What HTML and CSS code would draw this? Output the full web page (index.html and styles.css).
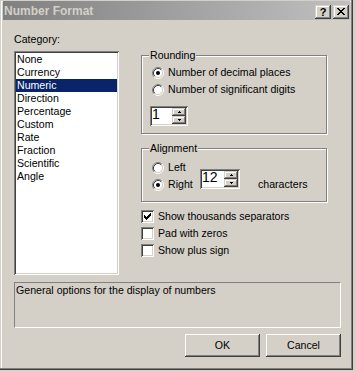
FILE: index.html
```html
<!DOCTYPE html>
<html>
<head>
<meta charset="utf-8">
<title>Number Format</title>
<link rel="stylesheet" href="styles.css">
</head>
<body>
<div class="window">
  <div class="titlebar">
    <span class="title">Number Format</span>
    <div class="caption-btns">
      <span class="cbtn help">?</span>
      <span class="cbtn close"><svg width="8" height="7" viewBox="0 0 8 7" shape-rendering="crispEdges"><path d="M0 0h2v1H0z M6 0h2v1H6z M1 1h2v1H1z M5 1h2v1H5z M2 2h4v1H2z M3 3h2v1H3z M2 4h4v1H2z M1 5h2v1H1z M5 5h2v1H5z M0 6h2v1H0z M6 6h2v1H6z" fill="#000"/></svg></span>
    </div>
  </div>
  <div class="client">
    <div class="main">
      <div class="left">
        <div class="label">Category:</div>
        <ul class="list">
          <li>None</li>
          <li>Currency</li>
          <li class="selected">Numeric</li>
          <li>Direction</li>
          <li>Percentage</li>
          <li>Custom</li>
          <li>Rate</li>
          <li>Fraction</li>
          <li>Scientific</li>
          <li>Angle</li>
        </ul>
      </div>
      <div class="right">
        <fieldset class="group">
          <legend>Rounding</legend>
          <div class="group-body rounding-body">
            <div class="row">
              <svg class="radio" width="12" height="12" viewBox="0 0 12 12"><circle cx="6" cy="6" r="4.5" fill="#fff"/><path d="M2.11 9.89A5.5 5.5 0 0 1 9.89 2.11" stroke="#808080" fill="none"/><path d="M9.89 2.11A5.5 5.5 0 0 1 2.11 9.89" stroke="#fff" fill="none"/><path d="M2.82 9.18A4.5 4.5 0 0 1 9.18 2.82" stroke="#404040" fill="none"/><path d="M9.18 2.82A4.5 4.5 0 0 1 2.82 9.18" stroke="#d4d0c8" fill="none"/><circle cx="6" cy="6" r="2" fill="#000"/></svg>
              <span>Number of decimal places</span>
            </div>
            <div class="row">
              <svg class="radio" width="12" height="12" viewBox="0 0 12 12"><circle cx="6" cy="6" r="4.5" fill="#fff"/><path d="M2.11 9.89A5.5 5.5 0 0 1 9.89 2.11" stroke="#808080" fill="none"/><path d="M9.89 2.11A5.5 5.5 0 0 1 2.11 9.89" stroke="#fff" fill="none"/><path d="M2.82 9.18A4.5 4.5 0 0 1 9.18 2.82" stroke="#404040" fill="none"/><path d="M9.18 2.82A4.5 4.5 0 0 1 2.82 9.18" stroke="#d4d0c8" fill="none"/></svg>
              <span>Number of significant digits</span>
            </div>
            <div class="spin spin-1">
              <span class="spin-val">1</span>
              <span class="spin-btns">
                <span class="sbtn"><svg width="3" height="2" viewBox="0 0 3 2" shape-rendering="crispEdges"><path d="M1 0h1v1H1z M0 1h3v1H0z" fill="#000"/></svg></span>
                <span class="sbtn"><svg width="3" height="2" viewBox="0 0 3 2" shape-rendering="crispEdges"><path d="M0 0h3v1H0z M1 1h1v1H1z" fill="#000"/></svg></span>
              </span>
            </div>
          </div>
        </fieldset>
        <fieldset class="group alignment">
          <legend>Alignment</legend>
          <div class="group-body align-body">
            <div class="radio-stack">
              <div class="row">
                <svg class="radio" width="12" height="12" viewBox="0 0 12 12"><circle cx="6" cy="6" r="4.5" fill="#fff"/><path d="M2.11 9.89A5.5 5.5 0 0 1 9.89 2.11" stroke="#808080" fill="none"/><path d="M9.89 2.11A5.5 5.5 0 0 1 2.11 9.89" stroke="#fff" fill="none"/><path d="M2.82 9.18A4.5 4.5 0 0 1 9.18 2.82" stroke="#404040" fill="none"/><path d="M9.18 2.82A4.5 4.5 0 0 1 2.82 9.18" stroke="#d4d0c8" fill="none"/></svg>
                <span>Left</span>
              </div>
              <div class="row">
                <svg class="radio" width="12" height="12" viewBox="0 0 12 12"><circle cx="6" cy="6" r="4.5" fill="#fff"/><path d="M2.11 9.89A5.5 5.5 0 0 1 9.89 2.11" stroke="#808080" fill="none"/><path d="M9.89 2.11A5.5 5.5 0 0 1 2.11 9.89" stroke="#fff" fill="none"/><path d="M2.82 9.18A4.5 4.5 0 0 1 9.18 2.82" stroke="#404040" fill="none"/><path d="M9.18 2.82A4.5 4.5 0 0 1 2.82 9.18" stroke="#d4d0c8" fill="none"/><circle cx="6" cy="6" r="2" fill="#000"/></svg>
                <span>Right</span>
              </div>
            </div>
            <div class="spin spin-12">
              <span class="spin-val">12</span>
              <span class="spin-btns">
                <span class="sbtn"><svg width="3" height="2" viewBox="0 0 3 2" shape-rendering="crispEdges"><path d="M1 0h1v1H1z M0 1h3v1H0z" fill="#000"/></svg></span>
                <span class="sbtn"><svg width="3" height="2" viewBox="0 0 3 2" shape-rendering="crispEdges"><path d="M0 0h3v1H0z M1 1h1v1H1z" fill="#000"/></svg></span>
              </span>
            </div>
            <span class="chars">characters</span>
          </div>
        </fieldset>
        <div class="checks">
          <div class="row">
            <span class="checkbox"><svg width="13" height="13" viewBox="0 0 13 13" shape-rendering="crispEdges"><path d="M3 5h1v3H3z M4 6h1v3H4z M5 7h1v3H5z M6 6h1v3H6z M7 5h1v3H7z M8 4h1v3H8z M9 3h1v3H9z" fill="#000"/></svg></span>
            <span>Show thousands separators</span>
          </div>
          <div class="row">
            <span class="checkbox"></span>
            <span>Pad with zeros</span>
          </div>
          <div class="row">
            <span class="checkbox"></span>
            <span>Show plus sign</span>
          </div>
        </div>
      </div>
    </div>
    <div class="desc">General options for the display of numbers</div>
    <div class="buttons">
      <span class="btn">OK</span>
      <span class="btn">Cancel</span>
    </div>
  </div>
</div>
</body>
</html>
```
FILE: styles.css
```css
* { box-sizing: border-box; }
html, body { margin: 0; padding: 0; }
body {
  width: 355px;
  height: 371px;
  overflow: hidden;
  background: #d4d0c8;
  font-family: "Liberation Sans", Arial, sans-serif;
  font-size: 10.6px;
  line-height: 13px;
  color: #000;
}
.window {
  width: 353px;
  height: 370px;
  background: #d4d0c8;
  padding: 1px 3px 0 3px;
  box-shadow: inset -1px -1px #404040, inset -2px -2px #808080, inset 1px 1px #d4d0c8, inset 2px 2px #fff;
}
.titlebar {
  display: flex;
  height: 19px;
  background: linear-gradient(to right, #808080, #c0c0c0);
}
.title {
  flex: 1;
  color: #d4d0c8;
  font-weight: bold;
  font-size: 12px;
  line-height: 18px;
  padding: 1px 0 0 1px;
  white-space: nowrap;
}
.caption-btns {
  display: flex;
  gap: 2px;
  margin: 4px 1px 0 0;
}
.cbtn {
  width: 16px;
  height: 14px;
  display: flex;
  align-items: center;
  justify-content: center;
  background: #d4d0c8;
  box-shadow: inset -1px -1px #404040, inset 1px 1px #d4d0c8, inset -2px -2px #808080, inset 2px 2px #fff;
}
.help {
  font-weight: bold;
  font-size: 11px;
  line-height: 14px;
  padding-bottom: 1px;
}
.close svg { display: block; margin-bottom: 1px; }

.client { padding: 13px 0 0 11px; }
.main { display: flex; align-items: flex-start; }
.left { width: 105px; }
.label { margin-bottom: 5px; }
.list {
  list-style: none;
  margin: 0;
  padding: 2px;
  height: 224px;
  background: #fff;
  box-shadow: inset 1px 1px #808080, inset -1px -1px #fff, inset 2px 2px #404040, inset -2px -2px #d4d0c8;
}
.list li { height: 13px; padding-left: 1px; white-space: nowrap; }
.list li.selected { background: #0a246a; color: #fff; }

.right { width: 187px; margin-left: 22px; padding-top: 16px; }
.group {
  margin: 0;
  padding: 0;
  width: 186px;
  min-width: 0;
  border: 1px solid #808080;
  box-shadow: inset 1px 1px #fff, 1px 1px #fff;
}
.group legend {
  margin-left: 7px;
  padding: 0 1px;
  background: #d4d0c8;
  line-height: 13px;
}
.group-body { padding: 2px 0 7px 10px; }
.row { display: flex; align-items: center; height: 17px; white-space: nowrap; }
.radio { display: block; flex: none; margin-right: 4px; }

.spin {
  display: flex;
  height: 20px;
  padding: 2px;
  background: #fff;
  box-shadow: inset 1px 1px #808080, inset -1px -1px #fff, inset 2px 2px #404040, inset -2px -2px #d4d0c8;
}
.spin-1 { width: 38px; margin: 8px 0 0 -2px; }
.spin-12 { width: 40px; margin-bottom: 4px; }
.spin-val {
  flex: 1;
  font-size: 14px;
  line-height: 12px;
  padding-left: 0;
}
.spin-btns { display: flex; flex-direction: column; width: 14px; }
.sbtn {
  height: 8px;
  display: flex;
  align-items: center;
  justify-content: center;
  background: #d4d0c8;
  box-shadow: inset -1px -1px #404040, inset 1px 1px #d4d0c8, inset -2px -2px #808080, inset 2px 2px #fff;
}
.sbtn svg { display: block; }

.alignment { margin-top: 8px; }
.align-body {
  display: flex;
  align-items: flex-end;
  padding: 4px 0 8px 10px;
}
.radio-stack { width: 48px; }
.chars { margin: 0 0 2px 18px; }

.checks { margin-top: 6px; }
.checkbox {
  width: 13px;
  height: 13px;
  flex: none;
  margin-right: 4px;
  background: #fff;
  box-shadow: inset 1px 1px #808080, inset -1px -1px #fff, inset 2px 2px #404040, inset -2px -2px #d4d0c8;
}
.checkbox svg { display: block; }

.desc {
  margin-top: 7px;
  width: 327px;
  height: 46px;
  padding: 1px 0 0 1px;
  border: 1px solid;
  border-color: #808080 #fff #fff #808080;
}
.buttons {
  display: flex;
  justify-content: flex-end;
  gap: 6px;
  width: 327px;
  margin-top: 6px;
}
.btn {
  width: 75px;
  height: 23px;
  display: flex;
  align-items: center;
  justify-content: center;
  background: #d4d0c8;
  box-shadow: inset -1px -1px #404040, inset 1px 1px #fff, inset -2px -2px #808080, inset 2px 2px #d4d0c8;
}
```
